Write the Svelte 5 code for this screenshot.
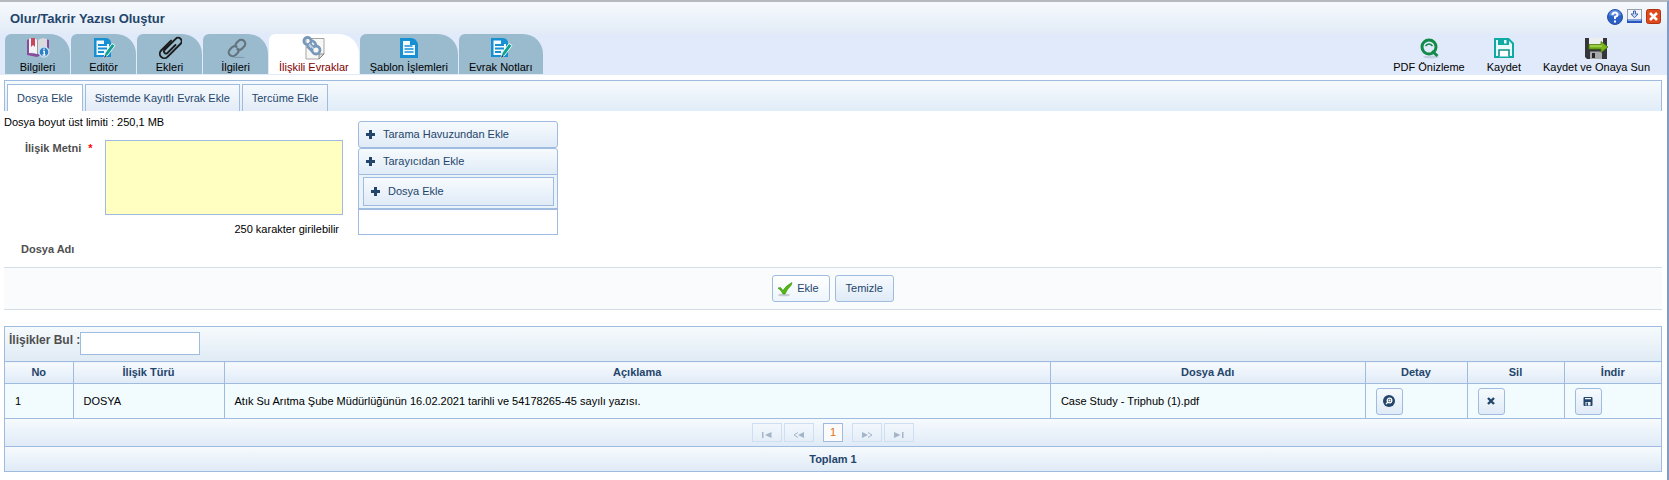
<script>
  const tabs = [
    { id: 'bilgi', label: 'Bilgileri' },
    { id: 'editor', label: 'Editör' },
    { id: 'ek', label: 'Ekleri' },
    { id: 'ilgi', label: 'İlgileri' },
    { id: 'ilisik', label: 'İlişkili Evraklar' },
    { id: 'sablon', label: 'Şablon İşlemleri' },
    { id: 'not', label: 'Evrak Notları' }
  ];
  const subTabs = ['Dosya Ekle', 'Sistemde Kayıtlı Evrak Ekle', 'Tercüme Ekle'];

  let activeTab = $state('ilisik');
  let activeSub = $state(0);
  let metin = $state('');
  let arama = $state('');
  let rows = $state([
    {
      tur: 'DOSYA',
      aciklama: 'Atık Su Arıtma Şube Müdürlüğünün 16.02.2021 tarihli ve 54178265-45 sayılı yazısı.',
      dosya: 'Case Study - Triphub (1).pdf'
    }
  ]);

  let filtered = $derived(rows.filter((r) => r.aciklama.toLowerCase().includes(arama.toLowerCase())));

  function sil(row) {
    rows = rows.filter((r) => r !== row);
  }
</script>

{#snippet plus()}
  <svg width="9" height="9" viewBox="0 0 9 9"><path d="M3 0h3v3h3v3H6v3H3V6H0V3h3z" fill="#24456b" /></svg>
{/snippet}

{#snippet tabIcon(id)}
  <svg width="24" height="24" viewBox="0 0 24 24">
    {#if id === 'bilgi'}
      <path d="M1 4l2-1v14l8 1 9-1V3l3 1v15l-10 1-2 1-10-2z" fill="#8a4a9e" />
      <path d="M3 3q5-2 8 1v14q-4-2-8-1z" fill="#f4f4f6" />
      <path d="M12 4q4-3 9-1v14q-5-1-9 1z" fill="#d7dbe0" />
      <path d="M5 2h4v9l-2-2-2 2z" fill="#c8475a" />
      <path d="M11.500 4v14" stroke="#9a9aa8" />
      <circle cx="18" cy="16" r="5" fill="#2b7fc4" stroke="#c5dff0" stroke-width="1.500" />
      <path d="M18 12.500v1.600M17 15.500h1.300v3M16.500 19h3" stroke="#fff" stroke-width="1.300" fill="none" />
    {:else if id === 'editor' || id === 'not'}
      <path d="M2 2h11q5 0 6 4v15H2z" fill="#168fd3" />
      <path d="M4.500 4.500H12V8h5v11H4.500z" fill="#f4fafd" />
      <path d="M6 9h9M6 12.500h9M6 16h6" stroke="#168fd3" stroke-width="1.800" />
      <path d="M12 22l1-5 7-9.500 3 2-7 9.500z" fill="#12a294" stroke="#e6f5f4" />
      <path d="M12 22l1-3 1.500 1.500z" fill="#335" />
    {:else if id === 'ek'}
      <g transform="rotate(45 12 12)" fill="none" stroke="#1b1b1b" stroke-linecap="round">
        <path d="M7.500 6v14a4.500 4.500 0 0 0 9 0V1.500a3.500 3.500 0 0 0-7 0V17a2.200 2.200 0 0 0 4.200 1V6" stroke-width="1.900" />
      </g>
    {:else if id === 'ilgi'}
      <path d="M8 22q8-2.500 14 0z" fill="#7e9aaa" />
      <g transform="rotate(45 13 12)" fill="none" stroke="#64747e" stroke-width="2.200" stroke-linecap="round">
        <path d="M10.500 11.500q-1.500-1-1.500-3V6a4 4 0 0 1 8 0v3q0 3-3 3.500" />
        <path d="M15 12q2 1 2 3.500V18a4 4 0 0 1-8 0v-3q0-3 3-3.500" />
      </g>
    {:else if id === 'ilisik'}
      <path d="M4 2.500h18V18l-5 5H4z" fill="#f7f7f5" stroke="#a5a5a3" />
      <path d="M17 23v-5h5z" fill="#dededb" stroke="#777" stroke-width=".8" />
      <g fill="none" stroke="#7898bb" stroke-width="2.800">
        <circle cx="5.500" cy="5" r="3.600" />
        <circle cx="14" cy="14" r="4" />
        <path d="M5 10l5 5M9.500 4.500q4 1 4.500 5.500M7 7l5 5" />
      </g>
      <path d="M7 8l5 5" stroke="#c3d5e8" stroke-width="1.200" />
    {:else}
      <path d="M3 2h11q5 0 7 6v14H3z" fill="#168fd3" />
      <path d="M6 5h7v4h5v10H6z" fill="#f4fafd" />
      <path d="M7.500 10h8M7.500 13h9M7.500 16h9" stroke="#168fd3" stroke-width="1.600" />
    {/if}
  </svg>
{/snippet}

<div class="dialog">
  <header>
    <div class="titlebar">
      <h1>Olur/Takrir Yazısı Oluştur</h1>
      <div class="window-buttons">
        <button aria-label="Yardım">
          <svg width="16" height="16" viewBox="0 0 16 16">
            <circle cx="8" cy="8" r="7.500" fill="#2c60c4" stroke="#2350a4" />
            <path d="M2 6a6 5 0 0 1 12 0q-6 3-12 0" fill="#5d8ade" />
            <path d="M5.500 6q0-2.500 2.500-2.500T10.500 6Q10.500 7.200 8 8v2M8 11.500v2" stroke="#fff" stroke-width="2" fill="none" />
          </svg>
        </button>
        <button aria-label="Küçült">
          <svg width="15" height="14" viewBox="0 0 15 14">
            <rect x=".5" y=".5" width="14" height="13" fill="#f2f5fa" stroke="#9a9fae" />
            <path d="M0 10.500h15V14H0z" fill="#2757bd" />
            <path d="M1 11.500h13" stroke="#86a5e2" />
            <path d="M6.500 2h2v3h2.500L7.500 8.800 4 5h2.500z" stroke="#4267b0" fill="#c9d7f2" />
          </svg>
        </button>
        <button aria-label="Kapat">
          <svg width="15" height="15" viewBox="0 0 15 15">
            <rect x=".5" y=".5" width="14" height="14" rx="2" fill="#dd4a1c" stroke="#b2330f" />
            <path d="M4 4l7 7M11 4l-7 7" stroke="#fff" stroke-width="2.600" />
          </svg>
        </button>
      </div>
    </div>
    <div class="toolbar">
      <nav>
        {#each tabs as tab}
          <button class="tab" class:active={activeTab === tab.id} onclick={() => (activeTab = tab.id)}>
            {@render tabIcon(tab.id)}
            <span>{tab.label}</span>
          </button>
        {/each}
      </nav>
      <div class="actions">
        <button>
          <svg width="24" height="24" viewBox="0 0 24 24">
            <ellipse cx="14" cy="21" rx="8" ry="1.500" fill="#c2cfe0" />
            <circle cx="12" cy="11" r="7" fill="none" stroke="#128a48" stroke-width="3" />
            <path d="M8.500 10q3.500-4 7 0" fill="none" stroke="#128a48" stroke-width="1.600" />
            <path d="M15 15l5.500 5" stroke="#128a48" stroke-width="3" />
          </svg>
          <span>PDF Önizleme</span>
        </button>
        <button>
          <svg width="24" height="24" viewBox="0 0 24 24">
            <path d="M3 3h13.500L21 7.500V21H3z" fill="#eafaf9" stroke="#10aaa5" stroke-width="2" />
            <path d="M6 3h11v6H6z" fill="#10aaa5" />
            <path d="M12 4h2.500v3.500H12z" fill="#eafaf9" />
            <path d="M7 20.500V14h10v6.500" fill="#fff" stroke="#10918d" stroke-width="1.600" />
          </svg>
          <span>Kaydet</span>
        </button>
        <button>
          <svg width="24" height="24" viewBox="0 0 24 24">
            <path d="M1 2h22v21H3l-2-2z" fill="#35363b" />
            <path d="M5 2h14v11H5z" fill="#eceef0" />
            <path d="M6 15.500h12V23H6z" fill="#a7a9ad" />
            <path d="M8 17h3v5H8z" fill="#28292d" />
            <path d="M5 8.500h12V5.500l7 5.500-7 5.500v-3.500H5z" fill="#79b51d" stroke="#4d7c10" stroke-width=".8" />
            <path d="M6 10h12" stroke="#c2e26d" />
          </svg>
          <span>Kaydet ve Onaya Sun</span>
        </button>
      </div>
    </div>
  </header>

  <main>
    <div class="subtabs">
      {#each subTabs as label, i}
        <button class:active={activeSub === i} onclick={() => (activeSub = i)}>{label}</button>
      {/each}
    </div>

    <p class="limit">Dosya boyut üst limiti : 250,1 MB</p>

    <div class="form">
      <div class="fields">
        <label for="metin">İlişik Metni <span class="required">*</span></label>
        <div class="metin">
          <textarea id="metin" maxlength="250" bind:value={metin}></textarea>
          <span class="counter">{250 - metin.length} karakter girilebilir</span>
        </div>
        <span class="name-label">Dosya Adı</span>
      </div>
      <div class="sources">
        <button class="source">{@render plus()}Tarama Havuzundan Ekle</button>
        <button class="source second">{@render plus()}Tarayıcıdan Ekle</button>
        <div class="upload">
          <button>{@render plus()}Dosya Ekle</button>
        </div>
        <div class="file-list"></div>
      </div>
    </div>

    <div class="form-buttons">
      <button class="add">
        <svg width="16" height="16" viewBox="0 0 16 16">
          <ellipse cx="7" cy="14" rx="6" ry="1.300" fill="#c5cbd2" />
          <path d="M1 7l2.500-.5L6 9.500Q9 4.500 15 1.500l-1 3Q10 8 8 13H6Q4 9 1 7z" fill="#51b912" stroke="#318b08" stroke-width=".6" />
        </svg>
        Ekle
      </button>
      <button onclick={() => (metin = '')}>Temizle</button>
    </div>

    <section class="grid">
      <div class="search">
        <label for="ara">İlişikler Bul :</label>
        <input id="ara" type="text" bind:value={arama} />
      </div>
      <table>
        <thead>
          <tr>
            <th class="no">No</th>
            <th class="type">İlişik Türü</th>
            <th>Açıklama</th>
            <th class="file">Dosya Adı</th>
            <th class="detail">Detay</th>
            <th class="delete">Sil</th>
            <th class="download">İndir</th>
          </tr>
        </thead>
        <tbody>
          {#each filtered as row, i}
            <tr>
              <td>{i + 1}</td>
              <td>{row.tur}</td>
              <td>{row.aciklama}</td>
              <td>{row.dosya}</td>
              <td>
                <button class="icon" aria-label="Detay">
                  <svg width="12" height="12" viewBox="0 0 12 12">
                    <circle cx="6" cy="6" r="6" fill="#24456b" />
                    <circle cx="6.500" cy="5.500" r="2.300" fill="none" stroke="#fff" stroke-width="1.300" />
                    <path d="M5 7L3 9M5.500 5.500h2M6.500 4.500v2" stroke="#fff" stroke-width="1.200" />
                  </svg>
                </button>
              </td>
              <td>
                <button class="icon" aria-label="Sil" onclick={() => sil(row)}>
                  <svg width="12" height="12" viewBox="0 0 12 12">
                    <path d="M3 3l6 6M9 3L3 9" stroke="#24456b" stroke-width="2.400" />
                  </svg>
                </button>
              </td>
              <td>
                <button class="icon" aria-label="İndir">
                  <svg width="12" height="12" viewBox="0 0 12 12">
                    <rect x="1.500" y="2" width="9" height="9" rx="1" fill="#24456b" />
                    <path d="M3 3h6v1.200H3zM3.500 7h5v3.500h-5z" fill="#f2f6fb" />
                    <path d="M4.500 7.500H6v3H4.500z" fill="#24456b" />
                  </svg>
                </button>
              </td>
            </tr>
          {/each}
        </tbody>
      </table>
      <div class="pager">
        <button disabled aria-label="İlk sayfa">
          <svg width="10" height="6" viewBox="0 0 10 6"><path d="M0 0h1.500v6H0zM9.500 0v6L3 3z" /></svg>
        </button>
        <button disabled aria-label="Önceki sayfa">
          <svg width="12" height="6" viewBox="0 0 12 6"><path d="M11 0v6L5 3z" /><path d="M5 .5L1 3l4 2.500" class="line" /></svg>
        </button>
        <button class="current">1</button>
        <button disabled aria-label="Sonraki sayfa">
          <svg width="12" height="6" viewBox="0 0 12 6"><path d="M1 0v6l6-3z" /><path d="M7 .5L11 3 7 5.500" class="line" /></svg>
        </button>
        <button disabled aria-label="Son sayfa">
          <svg width="10" height="6" viewBox="0 0 10 6"><path d="M8 0h1.500v6H8zM0 0v6l6.500-3z" /></svg>
        </button>
      </div>
      <div class="total">Toplam {filtered.length}</div>
    </section>
  </main>
</div>

<style>
  :global(body) {
    background: #fff;
  }

  .dialog {
    border-top: 2px solid #b4bac0;
    border-right: 2px solid #7f9dc8;
    min-height: 100vh;
    box-sizing: border-box;
    font-family: "Liberation Sans", Arial, sans-serif;
    font-size: 11px;
    line-height: 13px;
    color: #000;
  }

  button {
    font: inherit;
    color: #24456b;
    margin: 0;
    padding: 0;
    border: 0;
    background: none;
    cursor: pointer;
    box-sizing: border-box;
  }

  svg {
    display: block;
    flex: none;
  }

  header {
    background: #e0eafa;
  }

  .titlebar {
    display: flex;
    justify-content: space-between;
    height: 32px;
    padding: 0 6px 0 10px;
    background: linear-gradient(#f6fafd, #e2ebf7);
  }

  h1 {
    margin: 9px 0 0;
    font-size: 13px;
    line-height: 16px;
    color: #24456b;
  }

  .window-buttons {
    display: flex;
    align-items: flex-start;
    gap: 4px;
    padding-top: 7px;
  }

  .toolbar {
    display: flex;
    justify-content: space-between;
    padding: 0 17px 1px 5px;
  }

  nav {
    display: flex;
    gap: 1px;
  }

  .tab,
  .actions button {
    display: flex;
    flex-direction: column;
    align-items: center;
    gap: 1px;
    height: 40px;
    padding: 2px 10px 0;
    color: #000;
    white-space: nowrap;
  }

  .tab {
    min-width: 65px;
    background: #9abace;
    border-radius: 6px 20px 0 0;
  }

  .tab.active {
    background: #fff;
    color: #800000;
  }

  .actions {
    display: flex;
    gap: 22px;
  }

  .actions button {
    padding: 2px 0 0;
  }

  main {
    padding: 5px 5px 0 4px;
  }

  .subtabs {
    display: flex;
    align-items: flex-end;
    gap: 2px;
    height: 31px;
    padding-left: 2px;
    box-sizing: border-box;
    border: 1px solid #9fbbdf;
    border-bottom: 0;
    background: linear-gradient(#f6fafd, #e0ecf7);
  }

  .subtabs button {
    height: 27px;
    padding: 0 9px;
    border: 1px solid #9fbbdf;
    border-bottom: 0;
    background: linear-gradient(#f6fafd, #e2ebf7);
  }

  .subtabs button.active {
    background: #fff;
  }

  .limit {
    margin: 5px 0 0;
  }

  .form {
    display: flex;
    gap: 15px;
    height: 138px;
  }

  .fields {
    display: grid;
    grid-template-columns: 86px 238px;
    grid-template-rows: 97px 20px;
    align-content: start;
    padding: 11px 0 0 15px;
  }

  .fields label,
  .name-label,
  .search label {
    font-weight: bold;
    color: #4f4f4f;
  }

  .fields label {
    padding: 2px 0 0 6px;
  }

  .required {
    margin-left: 4px;
    color: #f00;
  }

  .name-label {
    padding: 6px 0 0 2px;
  }

  .metin {
    display: flex;
    flex-direction: column;
    gap: 8px;
  }

  textarea {
    width: 100%;
    height: 75px;
    box-sizing: border-box;
    border: 1px solid #9fbbdf;
    background: #ffffc1;
    resize: none;
    outline: none;
    font: inherit;
  }

  .counter {
    padding-right: 4px;
    text-align: right;
  }

  .sources {
    width: 200px;
    margin-top: -8px;
  }

  .source,
  .upload button {
    display: flex;
    align-items: center;
    gap: 8px;
    width: 100%;
    height: 27px;
    padding: 0 7px;
    border: 1px solid #9fbbdf;
    border-radius: 3px;
    background: linear-gradient(#f6fafd, #e0ebf7);
  }

  .source.second {
    border-radius: 3px 3px 0 0;
  }

  .upload {
    padding: 2px 3px 2px 4px;
    border: 1px solid #9fbbdf;
    border-top: 0;
    background: #eaf2fa;
  }

  .upload button {
    height: 29px;
    border-radius: 0;
  }

  .file-list {
    height: 24px;
    border: 1px solid #9fbbdf;
  }

  .form-buttons {
    display: flex;
    justify-content: center;
    gap: 5px;
    padding: 7px 0;
    border-top: 1px solid #d5dee6;
    border-bottom: 1px solid #d5dee6;
    background: #f9fbfd;
  }

  .form-buttons button {
    height: 27px;
    padding: 0 10px;
    border: 1px solid #9fbbdf;
    border-radius: 3px;
    background: linear-gradient(#f6fafd, #e0ebf7);
  }

  .form-buttons .add {
    display: flex;
    align-items: center;
    gap: 4px;
    padding: 0 10px 0 4px;
    background: linear-gradient(#fff, #eef5fd);
  }

  .grid {
    margin-top: 16px;
    border: 1px solid #9fbbdf;
  }

  .search {
    display: flex;
    height: 34px;
    padding: 5px 0 0 4px;
    box-sizing: border-box;
    background: linear-gradient(#f6fafd, #e0ebf5);
  }

  .search label {
    padding-top: 2px;
    font-size: 12px;
  }

  .search input {
    width: 120px;
    height: 23px;
    box-sizing: border-box;
    border: 1px solid #9fbbdf;
    background: #fff;
    outline: none;
    font: inherit;
  }

  table {
    width: 100%;
    table-layout: fixed;
    border-collapse: collapse;
  }

  th,
  td {
    border: 1px solid #9fbbdf;
    box-sizing: border-box;
  }

  th:first-child,
  td:first-child {
    border-left: 0;
  }

  th:last-child,
  td:last-child {
    border-right: 0;
  }

  th {
    height: 22px;
    padding: 0;
    color: #24456b;
    background: linear-gradient(#f6fafd, #e0ebf7);
  }

  td {
    height: 35px;
    padding: 0 10px;
    background: #f2fbfd;
  }

  .no {
    width: 68px;
  }

  .type {
    width: 151px;
  }

  .file {
    width: 19%;
  }

  .detail {
    width: 102px;
  }

  .delete {
    width: 97px;
  }

  .download {
    width: 97px;
  }

  .icon {
    display: flex;
    align-items: center;
    justify-content: center;
    width: 27px;
    height: 27px;
    border: 1px solid #9fbbdf;
    border-radius: 3px;
    background: linear-gradient(#f6fafd, #e0ebf7);
  }

  .pager {
    display: flex;
    align-items: center;
    justify-content: center;
    gap: 2px;
    height: 27px;
    background: linear-gradient(#f6fafd, #e0ebf7);
  }

  .pager button {
    display: flex;
    align-items: center;
    justify-content: center;
    width: 30px;
    height: 19px;
    padding-top: 4px;
    border: 1px solid #cfdff1;
  }

  .pager .current {
    width: 20px;
    margin: 0 7px;
    padding: 0;
    border-color: #9fbbdf;
    background: #fbfbfb;
    color: #e17009;
  }

  .pager svg {
    fill: #a3b5c8;
  }

  .line {
    fill: none;
    stroke: #a3b5c8;
  }

  .total {
    height: 24px;
    border-top: 1px solid #9fbbdf;
    background: linear-gradient(#f6fafd, #e0ebf7);
    color: #24456b;
    font-weight: bold;
    line-height: 24px;
    text-align: center;
  }
</style>
